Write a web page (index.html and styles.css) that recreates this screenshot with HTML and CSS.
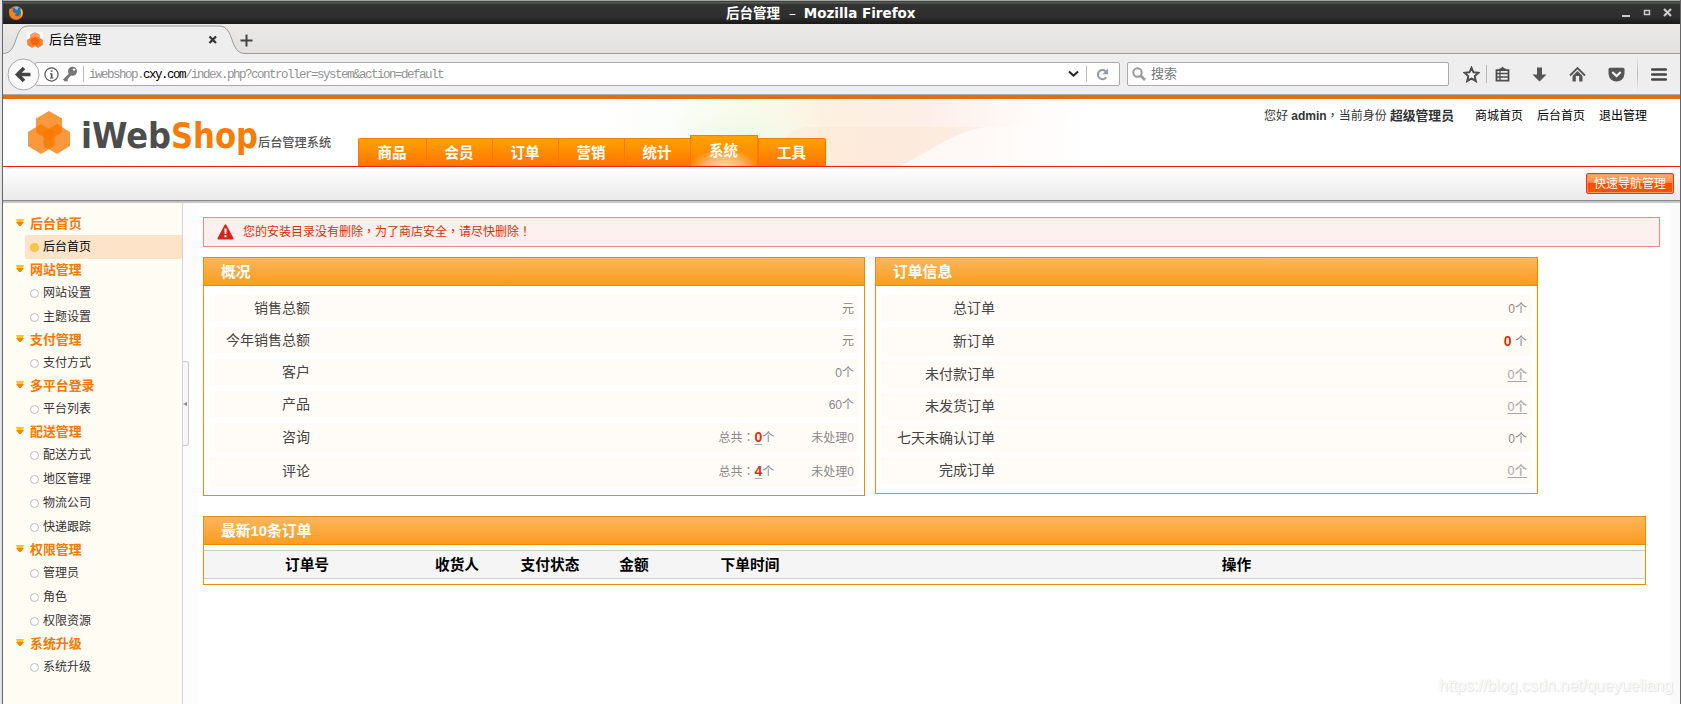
FILE: index.html
```html
<!DOCTYPE html>
<html lang="zh-CN">
<head>
<meta charset="utf-8">
<title>后台管理</title>
<link rel="stylesheet" href="styles.css">
</head>
<body>
<div class="window">
  <div class="titlebar">
    <svg class="firefox" width="16" height="16" viewBox="0 0 16 16">
      <circle cx="8" cy="8" r="7" fill="#e8681a"/>
      <circle cx="8.600" cy="6.600" r="4.600" fill="#2a6fae"/>
      <path d="M6 2.200c2-1 4-.6 5 .8-1 .2-1.500.8-1.500 1.800-1.500 0-2.500-1-3.500-2.600z" fill="#7cc0e8"/>
      <path d="M1.500 3.500c-1 3 0 8 4 10 4 1.700 8 0 9.200-3.500-2 2.300-5 2.300-6.700 1-1.700-1.300-.5-2.500 1-2.600-1.500-1-3-.4-3.800-1.400C4.500 6 5 5 4.600 4 3.600 4 2.500 4 1.500 3.500z" fill="#f0841c"/>
      <path d="M13.400 3.500c1.800 2.500 1.600 6.500-.6 8.500 0-2 .6-5-.4-7z" fill="#fbc31f"/>
    </svg>
    <div class="title">后台管理<span class="dash">–</span>Mozilla Firefox</div>
    <svg class="wmbtns" width="52" height="14" viewBox="0 0 52 14">
      <path d="M2 9h8v2H2z" fill="#ccc"/>
      <path d="M24.500 4.500h5v4h-5z" fill="none" stroke="#ccc" stroke-width="1.500"/>
      <path d="M44 3l7 7M51 3l-7 7" stroke="#ccc" stroke-width="2.200"/>
    </svg>
  </div>

  <div class="tabbar">
    <svg class="tabshape" width="242" height="30" viewBox="0 0 242 30">
      <path d="M0 30V29C16 29 10 2 25 2H216C232 2 226 29 241 29V30z" fill="#eee"/>
      <path d="M0 29.500C16 29.500 10 2 25 2H216C232 2 226 29.500 242 29.500" fill="none" stroke="#999"/>
    </svg>
    <div class="tab">
      <svg width="16" height="16" viewBox="0 0 42 43">
        <path d="M0 0h42v43H0z" fill="#fff"/>
        <path d="M21 0l13 7v15l-13 7-13-7V7z" fill="#f96" />
        <path d="M13 13l13 8v14l-13 8-13-8V21z" fill="#fa8330"/>
        <path d="M29 13l13 8v14l-13 8-13-8V21z" fill="#fa8330"/>
        <path d="M21 13l13 9-6 12H14L8 22z" fill="#f26505"/>
      </svg>
      <span class="tabname">后台管理</span>
      <svg class="close" width="10" height="10" viewBox="0 0 10 10"><path d="M1.500 1.500l6.500 6.500M8 1.500L1.500 8" stroke="#333" stroke-width="2.300"/></svg>
    </div>
    <svg class="plus" width="13" height="13" viewBox="0 0 13 13"><path d="M6.500 .5v12M.5 6.500h12" stroke="#444" stroke-width="2"/></svg>
  </div>

  <div class="toolbar">
    <svg class="back" width="33" height="33" viewBox="0 0 33 33">
      <circle cx="16.500" cy="16.500" r="15.500" fill="#fafafa" stroke="#a6a6a6"/>
      <path d="M17 10L10.500 16.500L17 23M11 16.500H23.500" fill="none" stroke="#444" stroke-width="3.600"/>
    </svg>
    <div class="urlbox">
      <svg class="info" width="15" height="15" viewBox="0 0 15 15"><circle cx="7.500" cy="7.500" r="6.600" fill="none" stroke="#555" stroke-width="1.200"/><path d="M6.700 3.200h1.800v1.600H6.700zM6 6.300h2.500v4.200h.8v1H6v-1h.8V7.300H6z" fill="#555"/></svg>
      <svg class="key" width="16" height="16" viewBox="0 0 16 16"><path d="M2 14.500L9 7.500" stroke="#777" stroke-width="2.800"/><path d="M2.500 14.500h2.500v-2.500" stroke="#777" stroke-width="1.500" fill="none"/><circle cx="10.500" cy="5.200" r="4.500" fill="#777"/><circle cx="12" cy="3.600" r="1.200" fill="#fff"/></svg>
      <i class="sep"></i>
      <span class="url">iwebshop.<b>cxy.com</b>/index.php?controller=system&amp;action=default</span>
      <svg class="chev" width="11" height="8" viewBox="0 0 11 8"><path d="M1 1.500l4.500 4.200L10 1.500" fill="none" stroke="#222" stroke-width="2"/></svg>
      <i class="sep reloadsep"></i>
      <svg class="reload" width="13" height="13" viewBox="0 0 13 13"><path d="M10.300 9.200A4.600 4.600 0 1 1 9.600 3.300" fill="none" stroke="#8a9bab" stroke-width="1.900"/><path d="M12 .5v5.700H6.500z" fill="#8a9bab"/></svg>
    </div>
    <div class="searchbox">
      <svg width="14" height="14" viewBox="0 0 14 14"><circle cx="5.500" cy="5.500" r="4.200" fill="none" stroke="#999" stroke-width="2"/><path d="M8.500 8.500l4.500 4.500" stroke="#999" stroke-width="2.600"/></svg>
      <span>搜索</span>
    </div>
    <div class="tools">
      <svg width="17" height="17" viewBox="0 0 17 17"><path d="M8.500 1.800l2 4.500 5 .5-3.800 3.300 1.100 5-4.300-2.600-4.300 2.600 1.100-5L1.500 6.800l5-.5z" fill="#fafafa" stroke="#4d4d4d" stroke-width="2"/></svg>
      <i class="sep starsep"></i>
      <svg width="15" height="17" viewBox="0 0 15 17"><path d="M1.500 4.200h12v10.500h-12z" fill="#eee" stroke="#4d4d4d" stroke-width="1.800"/><path d="M3 4l1.500-1.500L6 2.200 7.500.5 9 2.200l1.500.3L12 4z" fill="#4d4d4d"/><path d="M1.500 7.500h12M1.500 11h12M5 4v11" stroke="#4d4d4d" stroke-width="1.300"/></svg>
      <svg width="15" height="17" viewBox="0 0 15 17"><path d="M5 1.500h5v7h4.500L7.500 15.500.5 8.500H5z" fill="#555"/></svg>
      <svg width="17" height="17" viewBox="0 0 17 17"><path d="M1 9.500L8.500 2 16 9.500" fill="none" stroke="#555" stroke-width="1.900"/><path d="M8.500 5l5 5v5.500h-3.300V10H6.800v5.500H3.500V10z" fill="#555"/></svg>
      <svg width="17" height="17" viewBox="0 0 17 17"><path d="M.5 3.200q0-1.500 1.500-1.500h13q1.500 0 1.500 1.500v4.300a8 8 0 0 1-16 0z" fill="#555"/><path d="M4.300 6l4.200 4 4.200-4" fill="none" stroke="#f4f4f4" stroke-width="2.200"/></svg>
      <i class="sep menusep"></i>
      <svg width="16" height="17" viewBox="0 0 16 17"><path d="M1.200 3.500h13.600M1.200 8.500h13.600M1.200 13.500h13.600" stroke="#444" stroke-width="2.600" stroke-linecap="round"/></svg>
    </div>
  </div>

  <div class="header">
    <svg class="banner" width="540" height="67" viewBox="0 0 540 67">
      <defs>
        <linearGradient id="bg"><stop offset="0" stop-color="#fff"/><stop offset=".15" stop-color="#fafdf8"/><stop offset=".27" stop-color="#fbfbea"/><stop offset=".44" stop-color="#fdf0e0"/><stop offset=".6" stop-color="#fdeee8"/><stop offset=".78" stop-color="#fffaf7"/><stop offset=".9" stop-color="#fff"/></linearGradient>
        <radialGradient id="green"><stop offset="0" stop-color="#eef8e6"/><stop offset="1" stop-color="#f4faec" stop-opacity="0"/></radialGradient>
        <linearGradient id="haze"><stop offset="0" stop-color="#fff" stop-opacity=".65"/><stop offset="1" stop-color="#fff" stop-opacity="0"/></linearGradient>
      </defs>
      <path d="M0 0H540V67H0z" fill="url(#bg)"/>
      <ellipse cx="145" cy="36" rx="80" ry="34" fill="url(#green)"/>
      <path d="M301 67L345 42Q368 30 385 28H540V67z" fill="url(#haze)"/>
      <path d="M182 44Q190 30 206 28H385Q368 30 345 42L301 67H182z" fill="#fae6d0" opacity=".4"/>
    </svg>
    <div class="brand">
      <svg class="hexes" width="42" height="43" viewBox="0 0 42 43">
        <g fill="#f87800" fill-opacity=".76">
          <path d="M21 0l13 7.500v14L21 29 8 21.500v-14z"/>
          <path d="M13 13l13.500 8v14L13 43 0 35V21z"/>
          <path d="M29 13l13 8v14l-13 8-13.500-8V21z"/>
        </g>
      </svg>
      <svg class="wordmark" width="182" height="54" viewBox="0 0 182 54">
        <text x="0" y="37" textLength="90" lengthAdjust="spacingAndGlyphs" fill="#4d4d4d">iWeb</text>
        <text x="90" y="37" textLength="87" lengthAdjust="spacingAndGlyphs" fill="#f87c08">Shop</text>
      </svg>
      <span class="suffix">后台管理系统</span>
    </div>
    <div class="nav">
      <a class="first">商品</a><a>会员</a><a>订单</a><a>营销</a><a>统计</a><a class="active">系统</a><a class="last">工具</a>
    </div>
    <div class="user">
      <span class="who">您好 <b>admin</b><i lang="zh-TW">，</i>当前身份 <b class="role">超级管理员</b></span>
      <a>商城首页</a><a>后台首页</a><a>退出管理</a>
    </div>
  </div>

  <div class="subbar"><a class="quick">快速导航管理</a></div>

  <div class="main">
    <div class="side">
      <h3>后台首页</h3><a class="on">后台首页</a>
      <h3>网站管理</h3><a>网站设置</a><a>主题设置</a>
      <h3>支付管理</h3><a>支付方式</a>
      <h3>多平台登录</h3><a>平台列表</a>
      <h3>配送管理</h3><a>配送方式</a><a>地区管理</a><a>物流公司</a><a>快递跟踪</a>
      <h3>权限管理</h3><a>管理员</a><a>角色</a><a>权限资源</a>
      <h3>系统升级</h3><a>系统升级</a>
    </div>
    <div class="gutter"><div class="handle"></div></div>
    <div class="content">
      <div class="alert">
        <svg width="17" height="16" viewBox="0 0 17 16"><path d="M8.500 1.200L15.600 14.500H1.400z" fill="#d9241a" stroke="#d9241a" stroke-width="1.800" stroke-linejoin="round"/><path d="M7.300 4.500h2.400L9.300 10H7.700zM7.500 11.300h2v2h-2z" fill="#fff"/></svg>
        <span>您的安装目录没有删除<i lang="zh-TW">，</i>为了商店安全<i lang="zh-TW">，</i>请尽快删除<i lang="zh-TW">！</i></span>
      </div>
      <div class="panels">
        <div class="panel one">
          <h2>概况</h2>
          <div class="rows">
            <div class="row"><label>销售总额</label><span>元</span></div>
            <div class="row"><label>今年销售总额</label><span>元</span></div>
            <div class="row"><label>客户</label><span>0个</span></div>
            <div class="row"><label>产品</label><span>60个</span></div>
            <div class="row tall"><label>咨询</label><span class="total">总共<i lang="zh-TW">：</i><b class="u">0</b>个</span><span>未处理0</span></div>
            <div class="row tall"><label>评论</label><span class="total">总共<i lang="zh-TW">：</i><b class="u">4</b>个</span><span>未处理0</span></div>
          </div>
        </div>
        <div class="panel two">
          <h2>订单信息</h2>
          <div class="rows">
            <div class="row"><label>总订单</label><span>0个</span></div>
            <div class="row tall"><label>新订单</label><span><b>0</b> 个</span></div>
            <div class="row"><label>未付款订单</label><span class="link">0个</span></div>
            <div class="row"><label>未发货订单</label><span class="link">0个</span></div>
            <div class="row"><label>七天未确认订单</label><span>0个</span></div>
            <div class="row"><label>完成订单</label><span class="link">0个</span></div>
          </div>
        </div>
      </div>
      <div class="panel orders">
        <h2>最新10条订单</h2>
        <div class="thead"><b>订单号</b><b>收货人</b><b>支付状态</b><b>金额</b><b>下单时间</b><b>操作</b></div>
      </div>
    </div>
  </div>
  <div class="watermark">https://blog.csdn.net/queyueliang</div>
</div>
</body>
</html>
```

FILE: styles.css
```css
* { box-sizing: border-box; }
body {
  margin: 0;
  font: 12px "Liberation Sans", "Noto Sans CJK SC", sans-serif;
  color: #333;
  background: #e2e4e8;
}
svg { display: block; flex: none; }
i { font-style: normal; }
i[lang] { font-family: "Noto Sans CJK TC", sans-serif; }
.window {
  position: relative;
  width: 1679px;
  height: 704px;
  margin-left: 2px;
  border-left: 1px solid #666;
  border-right: 1px solid #666;
  background: #fff;
  overflow: hidden;
  display: flex;
  flex-direction: column;
}

/* window title */
.titlebar {
  flex: none;
  height: 24px;
  border-top: 1px solid #a5a5a0;
  background: linear-gradient(#333 0, #606560 2px, #343434 3px, #2e2e2e 70%, #191919);
  display: flex;
  align-items: center;
  padding: 0 8px 0 5px;
}
.title {
  flex: 1;
  font: bold 13.500px/22px "DejaVu Sans", "Noto Sans CJK SC", sans-serif;
  color: #fff;
  white-space: pre;
  padding-left: 702px;
}
.dash { margin: 0 8px 0 9px; font-weight: normal; }

/* tabs */
.tabbar {
  flex: none;
  position: relative;
  height: 30px;
  background: linear-gradient(#ebeae9, #e1e0de);
  border-bottom: 1px solid #999;
  display: flex;
  align-items: center;
}
.tabshape { position: absolute; left: 0; top: 0; }
.tab {
  position: relative;
  width: 215px;
  display: flex;
  align-items: center;
  padding-left: 24px;
  margin-top: 3px;
}
.tabname { font-size: 13px; line-height: 20px; color: #000; margin-left: 6px; flex: 1; }
.plus { margin: 3px 0 0 22px; }

/* navigation toolbar */
.toolbar {
  flex: none;
  height: 41px;
  background: #eee;
  border-bottom: 1px solid #aaa;
  display: flex;
  align-items: center;
  padding: 0 13px 0 4px;
}
.back { position: relative; z-index: 1; }
.urlbox, .searchbox {
  height: 24px;
  border: 1px solid #aaa;
  border-radius: 2px;
  background: #fff;
  display: flex;
  align-items: center;
}
.urlbox { width: 1085px; margin-left: -5px; padding: 0 10px 0 8px; }
.key { margin-left: 3px; }
.sep { width: 1px; height: 16px; background: #bbb; margin: 0 5px; }
.url {
  flex: 1;
  font: 12.500px/20px "Liberation Mono", monospace;
  letter-spacing: -1.500px;
  color: #929292;
  padding-top: 2px;
}
.url b { font-weight: normal; color: #000; }
.reloadsep { margin: 0 9px 0 7px; }
.searchbox { width: 322px; margin-left: 7px; padding-left: 4px; }
.searchbox span { color: #777; font-size: 13px; margin-left: 5px; line-height: 20px; }
.tools { display: flex; align-items: center; flex: 1; justify-content: space-between; padding-left: 14px; }
.tools svg + svg { margin-left: 22px; }
.tools .starsep { margin: 0 0 0 6px; height: 18px; }
.tools .starsep + svg { margin-left: 8px; }
.tools .menusep { height: 36px; margin: 0 13px 0 12px; background: linear-gradient(#eee, #bbb, #eee); }

/* shop header */
.header {
  flex: none;
  position: relative;
  height: 72px;
  border-top: 4px solid #e96b10;
  border-bottom: 1px solid #f81c00;
  display: flex;
}
.banner { position: absolute; left: 597px; top: 0; }
.brand { width: 355px; padding: 12px 0 0 25px; display: flex; }
.hexes { flex: none; }
.wordmark { margin-left: 11px; overflow: visible; font: bold 35.500px "DejaVu Sans Condensed", "DejaVu Sans", sans-serif; font-stretch: condensed; }
.suffix { margin: 20px 0 0 -5px; font-size: 12.200px; font-weight: 500; line-height: 24px; color: #555; white-space: nowrap; }
.nav { position: relative; display: flex; align-items: flex-end; height: 67px; }
.nav a {
  width: 66px;
  height: 28px;
  border-top: 1px solid #f87c00;
  border-left: 1px solid #f87800;
  background: linear-gradient(#ffa200, #ff7400);
  color: #fff;
  font: bold 14.500px/25px "Noto Sans CJK SC", sans-serif;
  text-align: center;
  padding-right: 1px;
}
.nav .first { width: 68px; border-radius: 2px 0 0 0; }
.nav .active {
  width: 68px;
  height: 31px;
  line-height: 28px;
  border-right: 1px solid #f87800;
  background: radial-gradient(ellipse 34px 17px at 50% 100%, #ffd5a8, #ffb868 50%, transparent), linear-gradient(#ffa200, #ff8000);
}
.nav .last { width: 68px; border-right: 1px solid #f87800; border-radius: 0 2px 0 0; }
.user {
  position: relative;
  flex: 1;
  display: flex;
  justify-content: flex-end;
  line-height: 18px;
  padding: 8px 33px 0 0;
  white-space: nowrap;
}
.user a { color: #000; margin-left: 14px; }
.user .who + a { margin-left: 21px; }
.role { font-size: 12.800px; }
.user i { line-height: 0; }

.subbar {
  flex: none;
  height: 36px;
  background: linear-gradient(#fff, #e9e9e9);
  border-bottom: 1px solid #c8c8c8;
  box-shadow: inset 0 -1px 0 #c4c4c4, inset 0 -2px 0 #888;
  display: flex;
  justify-content: flex-end;
  padding: 6px 6px 0 0;
}
.quick {
  width: 88px;
  height: 21px;
  border: 1px solid #f83800;
  border-radius: 2px;
  box-shadow: inset 0 0 0 1px #ff9860;
  background: linear-gradient(#ffb070, #ff8440 48%, #ff4c00 50%, #ff5408);
  color: #fff;
  line-height: 20px;
  text-align: center;
}

/* sidebar */
.main { flex: 1; display: flex; min-height: 0; }
.side { width: 180px; flex: none; background: #fffcf3; border-right: 1px solid #d4d4d4; padding-top: 10px; display: flex; flex-direction: column; }
.side h3 {
  margin: 0;
  height: 22px;
  padding-left: 27px;
  font: bold 12.900px/20px "Noto Sans CJK SC", sans-serif;
  color: #f87800;
  position: relative;
}
.side h3::before, .side h3::after {
  content: "";
  position: absolute;
  left: 13px;
  top: 6px;
  width: 8px;
  height: 3px;
  background: #ffc800;
  clip-path: polygon(0 0, 100% 0, 85% 100%, 15% 100%);
}
.side h3::after { top: 9px; height: 4px; background: #f88400; clip-path: polygon(0 0, 100% 0, 60% 100%, 40% 100%); }
.side a {
  height: 24px;
  line-height: 24px;
  margin-left: 22px;
  display: flex;
  align-items: center;
  gap: 5px;
  padding-left: 6px;
}
.side a::before { content: ""; flex: none; width: 7px; height: 7px; border: 1px solid #bcbcc4; border-radius: 50%; background: #fff; }
.side .on { background: #fde4c8; color: #000; border-radius: 2px 0 0 2px; }
.side .on::before { background: #f8c838; border-color: #eab860; }
.side a { gap: 4px; padding-left: 5px; }
.gutter { width: 15px; flex: none; background: #fcfcfc; padding-top: 158px; }
.handle {
  width: 6px;
  height: 85px;
  border: 1px solid #ccc;
  border-left: 0;
  border-radius: 0 3px 3px 0;
  background: #f6f6f6;
  display: flex;
  align-items: center;
}
.handle::before { content: ""; border: 2.500px solid transparent; border-right: 4px solid #888; border-left: 0; }

/* content */
.content { flex: 1; border-top: 4px solid #fcfcfc; border-right: 10px solid #fafafa; padding: 10px 10px 0 5px; }
.alert {
  height: 30px;
  border: 1px solid #f88484;
  background: #fff0f0;
  display: flex;
  align-items: center;
  padding-left: 13px;
  color: #d83000;
}
.alert span { margin-left: 9px; line-height: 18px; height: 19px; white-space: nowrap; }
.alert i, .total i { line-height: 0; }
.panels { display: flex; align-items: flex-start; gap: 10px; margin-top: 10px; height: 259px; }
.panel { border: 1px solid #ea8c10; }
.one { width: 662px; }
.two { width: 663px; }
.panel h2 {
  margin: 0;
  height: 28px;
  border-bottom: 1px solid #ee8a08;
  background: linear-gradient(#fcb65c, #fb9c20);
  color: #fff;
  font: bold 14.800px/28px "Liberation Sans", "Noto Sans CJK SC", sans-serif;
  padding-left: 17px;
}
.rows { padding: 9px 5px; display: flex; flex-direction: column; gap: 5px; }
.row { height: 27px; background: #fffbf6; display: flex; align-items: center; padding-right: 5px; color: #888; }
.row > span { margin-bottom: 2px; }
.row.tall { height: 29px; }
.row label { width: 101px; text-align: right; font-size: 14px; line-height: 24px; margin-bottom: 2px; color: #444; margin-right: auto; }
.two .row label { width: 114px; }
.row b { font: bold 14px "Liberation Sans", sans-serif; color: #d03810; }
.row .u { text-decoration: underline 1px #aaa; text-underline-offset: 2px; }
.total { margin-right: 37px; }
.row .link { color: #aaa; font-weight: 500; font-size: 12.500px; text-decoration: underline 1px; text-underline-offset: 2px; }
.orders { width: 1443px; height: 69px; }
.thead {
  margin-top: 5px;
  height: 29px;
  border: solid #ccc;
  border-width: 1px 0;
  background: #f5f5f5;
  display: grid;
  grid-template-columns: 206px 94px 92px 76px 156px 1fr;
  text-align: center;
  font: 14.700px/25px "Noto Sans CJK SC", sans-serif;
  color: #000;
}
.watermark {
  position: absolute;
  right: 7px;
  bottom: 8px;
  font: 16px/20px "Liberation Sans", sans-serif;
  color: #fbfbfb;
  text-shadow: 1px 1px 1px #e0e0e0, 0 0 1px #e2e2e2;
}
```
